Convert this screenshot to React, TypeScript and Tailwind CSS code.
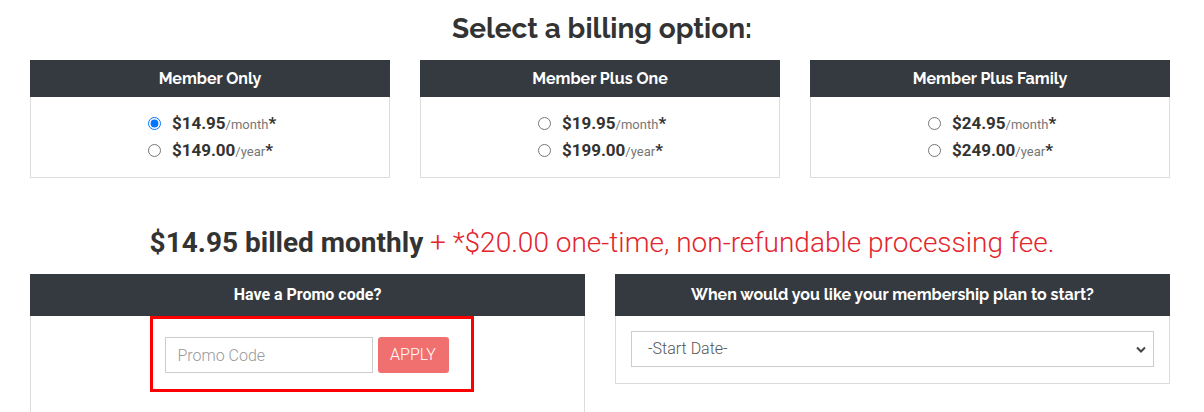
import { useState } from 'react';

const plans = [
  { name: 'Member Only', month: '14.95', year: '149.00' },
  { name: 'Member Plus One', month: '19.95', year: '199.00' },
  { name: 'Member Plus Family', month: '24.95', year: '249.00' },
];

const heading = { fontFamily: 'Raleway, Lato, "Open Sans", sans-serif' };
const body = { fontFamily: 'Roboto, "Liberation Sans", sans-serif' };

function PriceRow({ checked, price, per, onPick }: { checked: boolean; price: string; per: string; onPick: () => void }) {
  return (
    <label className="flex items-center gap-[11px] h-[27px] cursor-pointer">
      <input type="radio" name="billing" checked={checked} onChange={onPick} className="w-[13px] h-[13px] m-0" />
      <span className="text-[#333] text-[17px] font-bold">
        ${price}
        <span className="text-[13px] font-normal text-[#777]">/{per}</span>
        <span>*</span>
      </span>
    </label>
  );
}

export default function App() {
  const [picked, setPicked] = useState('0-month');

  return (
    <main className="w-[1204px] h-[412px] overflow-hidden bg-white" style={body}>
      <div className="px-[30px] pt-[12px]">
        <h2 className="text-center text-[28px] font-bold text-[#333] leading-[34px]" style={heading}>
          Select a billing option:
        </h2>

        <div className="grid grid-cols-3 gap-[30px] mt-[14px] mr-[4px]">
          {plans.map((p, i) => (
            <div key={p.name} className="border border-[#dcdcdc]">
              <div className="bg-[#343a40] h-[37px] -m-px mb-0 flex items-center justify-center text-white text-[16px] font-bold" style={heading}>
                {p.name}
              </div>
              <div className="flex flex-col items-center pt-[13px] pb-[13px] pl-[4px]">
                <div>
                  <PriceRow checked={picked === `${i}-month`} price={p.month} per="month" onPick={() => setPicked(`${i}-month`)} />
                  <PriceRow checked={picked === `${i}-year`} price={p.year} per="year" onPick={() => setPicked(`${i}-year`)} />
                </div>
              </div>
            </div>
          ))}
        </div>

        <p className="text-center text-[28px] leading-[32px] mt-[49px]">
          <span className="font-bold text-[#333]">$14.95 billed monthly</span>
          <span className="font-light text-[#e3242b]"> + *$20.00 one-time, non-refundable processing fee.</span>
        </p>

        <div className="grid grid-cols-2 gap-[30px] mt-[15px] mr-[4px]">
          <div className="border border-[#dcdcdc] h-[160px]">
            <div className="bg-[#343a40] h-[42px] -m-px mb-0 flex items-center justify-center text-white text-[16px] font-bold">
              Have a Promo code?
            </div>
            <div className="flex justify-center pl-[8px]">
              <div className="border-[3px] border-[#ff0000] w-[324px] h-[76px] flex items-center gap-[5px] pl-[12px] pt-[2px]">
                <input
                  placeholder="Promo Code"
                  className="w-[208px] h-[36px] border border-[#ccc] px-[12px] text-[16px] font-light text-[#555] placeholder:text-[#999] outline-none"
                />
                <button className="w-[71px] h-[36px] bg-[#f07070] text-white text-[16px] font-light rounded-[3px]">APPLY</button>
              </div>
            </div>
          </div>

          <div className="border border-[#dcdcdc] h-[110px]">
            <div className="bg-[#343a40] h-[42px] -m-px mb-0 flex items-center justify-center text-white text-[16px] font-bold" style={heading}>
              When would you like your membership plan to start?
            </div>
            <div className="px-[15px] pt-[15px]">
              <div className="relative">
                <select className="appearance-none w-full h-[36px] border border-[#ccc] bg-white pl-[16px] text-[16px] text-[#555] font-light outline-none">
                  <option>-Start Date-</option>
                </select>
                <svg className="absolute right-[8px] top-[15px] w-[10px] h-[7px] pointer-events-none" viewBox="0 0 10 7">
                  <path d="M1 1.5l4 4 4-4" fill="none" stroke="#444" strokeWidth="2" />
                </svg>
              </div>
            </div>
          </div>
        </div>
      </div>
    </main>
  );
}
